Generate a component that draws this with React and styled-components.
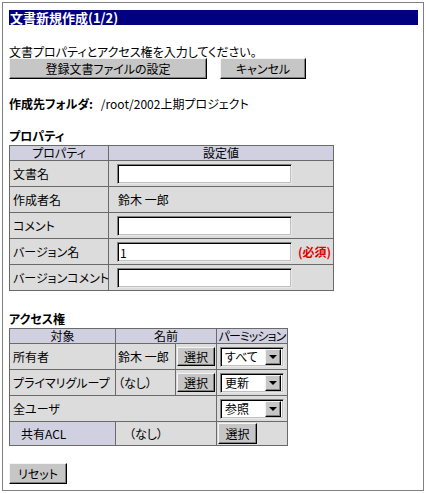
import React from 'react';
import styled, { createGlobalStyle } from 'styled-components';

const GlobalStyle = createGlobalStyle`
  body {
    margin: 0;
    background: #fff;
    font-family: "Noto Sans CJK JP", "Noto Sans", sans-serif;
    font-size: 12px;
    color: #000;
    font-feature-settings: "palt";
  }
`;

const Frame = styled.div`
  box-sizing: border-box;
  margin: 2px 0 0 2px;
  width: 422px;
  height: 489px;
  border: 1px solid #808080;
  padding: 7px 5px 0 6px;
`;

const TitleBar = styled.h1`
  margin: 0;
  height: 15px;
  line-height: 15px;
  padding-left: 1px;
  background: #000080;
  color: #fff;
  font-size: 13px;
  font-weight: bold;
`;

const Intro = styled.p`
  margin: 20px 0 0;
  line-height: 13px;
`;

const ButtonRow = styled.div`
  display: flex;
  gap: 13px;
`;

const Button = styled.button`
  box-sizing: border-box;
  width: ${({ $w }) => $w}px;
  height: ${({ $h }) => $h || 21}px;
  margin-top: ${({ $mt }) => $mt || 0}px;
  padding: 0;
  font: inherit;
  font-size: 12px;
  line-height: 1;
  color: #000;
  background: #c6c6c6;
  border: 1px solid;
  border-color: #f4f4f4 #000 #000 #f4f4f4;
  box-shadow: inset -1px -1px 0 #808080;
  vertical-align: middle;
`;

const Folder = styled.p`
  margin: 18px 0 0;
  line-height: 14px;
  b {
    margin-right: 8px;
  }
`;

const Heading = styled.h2`
  margin: ${({ $mt }) => $mt}px 0 0;
  font-size: 12px;
  font-weight: bold;
  line-height: 14px;
`;

const Grid = styled.table`
  border-collapse: collapse;
  table-layout: fixed;
  width: ${({ $w }) => $w}px;
  margin-top: 2px;
`;

const Head = styled.th`
  background: #d0d0e0;
  font-weight: normal;
  border: 1px solid #6a6a6a;
  height: 14px;
  padding: 0;
  line-height: 14px;
  text-align: center;
  white-space: nowrap;
  letter-spacing: ${({ $tight }) => ($tight ? '-0.9px' : 'normal')};
`;

const Cell = styled.td`
  background: ${({ $alt }) => ($alt ? '#d0d0e0' : '#dcdcdc')};
  border: 1px solid #6a6a6a;
  height: ${({ $h }) => $h || 25}px;
  padding: 0 0 0 ${({ $pl }) => ($pl === undefined ? 3 : $pl)}px;
  white-space: nowrap;
  line-height: 14px;
`;

const TextInput = styled.input`
  box-sizing: border-box;
  width: 175px;
  height: 20px;
  margin: 0;
  padding: 1px 2px 0;
  font: inherit;
  font-size: 12px;
  background: #fff;
  border: 1px solid;
  border-color: #808080 #e8e8e8 #e8e8e8 #808080;
  box-shadow: inset 1px 1px 0 #000, inset -1px -1px 0 #c0c0c0;
  vertical-align: middle;
  outline: none;
`;

const Required = styled.span`
  margin-left: 6px;
  color: #e00000;
  font-weight: bold;
  vertical-align: middle;
`;

const SelectBox = styled.div`
  box-sizing: border-box;
  display: flex;
  align-items: center;
  justify-content: space-between;
  width: 64px;
  height: 20px;
  padding: 0 2px 0 4px;
  background: #fff;
  border: 1px solid;
  border-color: #808080 #e8e8e8 #e8e8e8 #808080;
  box-shadow: inset 1px 1px 0 #000, inset -1px -1px 0 #c0c0c0;
`;

const Arrow = styled.span`
  box-sizing: border-box;
  display: flex;
  align-items: center;
  justify-content: center;
  width: 16px;
  height: 16px;
  background: #c6c6c6;
  border: 1px solid;
  border-color: #f4f4f4 #000 #000 #f4f4f4;
  box-shadow: inset -1px -1px 0 #808080;
  &::after {
    content: '';
    border-left: 4px solid transparent;
    border-right: 4px solid transparent;
    border-top: 4px solid #000;
    margin-top: 1px;
  }
`;

const Select = ({ value }) => (
  <SelectBox>
    <span>{value}</span>
    <Arrow />
  </SelectBox>
);

const properties = [
  { label: '文書名', input: '' },
  { label: '作成者名', text: '鈴木 一郎' },
  { label: 'コメント', input: '' },
  { label: 'バージョン名', input: '1', required: true },
  { label: 'バージョンコメント', input: '' },
];

export default function App() {
  return (
    <>
      <GlobalStyle />
      <Frame>
        <TitleBar>文書新規作成(1/2)</TitleBar>
        <Intro>文書プロパティとアクセス権を入力してください。</Intro>
        <ButtonRow>
          <Button $w={198}>登録文書ファイルの設定</Button>
          <Button $w={86}>キャンセル</Button>
        </ButtonRow>
        <Folder>
          <b>作成先フォルダ:</b>/root/2002上期プロジェクト
        </Folder>

        <Heading $mt={18}>プロパティ</Heading>
        <Grid $w={325}>
          <colgroup>
            <col style={{ width: 99 }} />
            <col />
          </colgroup>
          <thead>
            <tr>
              <Head>プロパティ</Head>
              <Head>設定値</Head>
            </tr>
          </thead>
          <tbody>
            {properties.map((p) => (
              <tr key={p.label}>
                <Cell>{p.label}</Cell>
                <Cell $pl={p.text ? 9 : 8}>
                  {p.text !== undefined ? (
                    p.text
                  ) : (
                    <TextInput defaultValue={p.input} />
                  )}
                  {p.required && <Required>(必須)</Required>}
                </Cell>
              </tr>
            ))}
          </tbody>
        </Grid>

        <Heading $mt={21}>アクセス権</Heading>
        <Grid $w={278}>
          <colgroup>
            <col style={{ width: 106 }} />
            <col style={{ width: 60 }} />
            <col style={{ width: 41 }} />
            <col style={{ width: 71 }} />
          </colgroup>
          <thead>
            <tr>
              <Head>対象</Head>
              <Head colSpan={2}>名前</Head>
              <Head $tight>パーミッション</Head>
            </tr>
          </thead>
          <tbody>
            <tr>
              <Cell>所有者</Cell>
              <Cell $pl={2}>鈴木 一郎</Cell>
              <Cell $pl={1}>
                <Button $w={38} $h={19}>選択</Button>
              </Cell>
              <Cell $pl={3}>
                <Select value="すべて" />
              </Cell>
            </tr>
            <tr>
              <Cell>プライマリグループ</Cell>
              <Cell $pl={2}>（なし）</Cell>
              <Cell $pl={1}>
                <Button $w={38} $h={19}>選択</Button>
              </Cell>
              <Cell $pl={3}>
                <Select value="更新" />
              </Cell>
            </tr>
            <tr>
              <Cell colSpan={3}>全ユーザ</Cell>
              <Cell $pl={3}>
                <Select value="参照" />
              </Cell>
            </tr>
            <tr>
              <Cell $alt $pl={11} $h={23}>共有ACL</Cell>
              <Cell colSpan={2} $pl={13} $h={23}>（なし）</Cell>
              <Cell $pl={1} $h={23}>
                <Button $w={39} $h={21}>選択</Button>
              </Cell>
            </tr>
          </tbody>
        </Grid>

        <Button $w={58} $mt={17}>リセット</Button>
      </Frame>
    </>
  );
}
